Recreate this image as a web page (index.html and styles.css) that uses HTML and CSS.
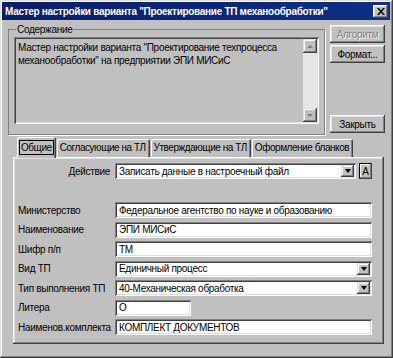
FILE: index.html
```html
<!DOCTYPE html>
<html lang="ru">
<head>
    <meta charset="UTF-8">
    <title>Мастер настройки варианта</title>
    <link rel="stylesheet" href="styles.css">
</head>
<body>
    <div class="window">
        <div class="titlebar">
            <span class="title">Мастер настройки варианта "Проектирование ТП механообработки"</span>
            <button class="close">
                <svg width="8" height="7" viewBox="0 0 8 7"><path d="M0 0h2l2 2.5L6 0h2L5 3.5 8 7H6L4 4.5 2 7H0l3-3.5z" fill="#000"/></svg>
            </button>
        </div>

        <div class="top">
            <fieldset class="group">
                <legend>Содержание</legend>
                <div class="memo">
                    <div class="memo-text">Мастер настройки варианта "Проектирование техпроцесса механообработки" на предприятии ЭПИ МИСиС</div>
                    <div class="vscroll">
                        <div class="sbtn"><span class="tri-up"></span></div>
                        <div class="track"></div>
                        <div class="sbtn"><span class="tri-down"></span></div>
                    </div>
                </div>
            </fieldset>
            <div class="side">
                <button class="btn disabled">Алгоритм</button>
                <button class="btn">Формат...</button>
                <button class="btn btn-close">Закрыть</button>
            </div>
        </div>

        <div class="tabs">
            <div class="tab active"><span class="focus">Общие</span></div>
            <div class="tab">Согласующие на ТЛ</div>
            <div class="tab">Утверждающие на ТЛ</div>
            <div class="tab">Оформление бланков</div>
        </div>

        <div class="panel">
            <div class="row">
                <span class="label right">Действие</span>
                <div class="action">
                    <div class="field combo"><span class="val">Записать данные в настроечный файл</span><span class="drop"><span class="tri-down dark"></span></span></div>
                    <button class="abtn">A</button>
                </div>
            </div>

            <div class="fields">
                <div class="row">
                    <span class="label">Министерство</span>
                    <div class="field"><span class="val">Федеральное агентство по науке и образованию</span></div>
                </div>
                <div class="row">
                    <span class="label">Наименование</span>
                    <div class="field"><span class="val">ЭПИ МИСиС</span></div>
                </div>
                <div class="row">
                    <span class="label">Шифр п/п</span>
                    <div class="field"><span class="val">ТМ</span></div>
                </div>
                <div class="row">
                    <span class="label">Вид ТП</span>
                    <div class="field combo"><span class="val">Единичный процесс</span><span class="drop"><span class="tri-down dark"></span></span></div>
                </div>
                <div class="row">
                    <span class="label">Тип выполнения ТП</span>
                    <div class="field combo"><span class="val">40-Механическая обработка</span><span class="drop"><span class="tri-down dark"></span></span></div>
                </div>
                <div class="row">
                    <span class="label">Литера</span>
                    <div class="field short"><span class="val">О</span></div>
                </div>
                <div class="row">
                    <span class="label">Наименов.комплекта</span>
                    <div class="field"><span class="val">КОМПЛЕКТ ДОКУМЕНТОВ</span></div>
                </div>
            </div>
        </div>
    </div>
</body>
</html>
```

FILE: styles.css
```css
* {
    box-sizing: border-box;
}
body {
    margin: 0;
    background: #c0c0c0;
    font-family: "Liberation Sans", Arial, sans-serif;
    font-size: 10px;
    letter-spacing: -0.3px;
    color: #000;
}
.window {
    width: 393px;
    height: 358px;
    background: #c0c0c0;
    padding: 2px 3px 3px 2px;
    display: flex;
    flex-direction: column;
    box-shadow: inset -1px -1px #404040, inset 1px 1px #dfdfdf, inset -2px -2px #808080, inset 2px 2px #fff;
}
.titlebar {
    height: 18px;
    background: linear-gradient(90deg, #0a1d6a, #0e2f86);
    display: flex;
    align-items: center;
    justify-content: space-between;
    padding: 0 2px 0 3px;
}
.title {
    color: #fff;
    font-weight: bold;
    font-size: 10px;
    white-space: nowrap;
    overflow: hidden;
}
.close {
    flex-shrink: 0;
    width: 15px;
    height: 13px;
    padding: 0;
    border: none;
    background: #c0c0c0;
    display: flex;
    align-items: center;
    justify-content: center;
    box-shadow: inset -1px -1px #404040, inset 1px 1px #fff, inset -2px -2px #808080, inset 2px 2px #dfdfdf;
}

/* top part: group box + buttons */
.top {
    display: flex;
    gap: 5px;
    padding: 0 4px 0 6px;
}
.group {
    margin: 3px 0 0;
    width: 317px;
    height: 112px;
    padding: 1px 5px 8px 5px;
    border: 1px solid #808080;
    box-shadow: 1px 1px 0 #fff;
}
.group legend {
    padding: 0 1px;
    margin-left: 2px;
    line-height: 13px;
}
.memo {
    height: 87px;
    display: flex;
    background: #c0c0c0;
    padding: 2px;
    box-shadow: inset 1px 1px #808080, inset -1px -1px #fff, inset 2px 2px #404040, inset -2px -2px #dfdfdf;
}
.memo-text {
    flex: 1;
    padding: 2px 0 0 2px;
    line-height: 13px;
}
.vscroll {
    width: 14px;
    display: flex;
    flex-direction: column;
}
.track {
    flex: 1;
    background: #e6e6e6;
}
.sbtn {
    height: 14px;
    background: #c0c0c0;
    display: flex;
    align-items: center;
    justify-content: center;
    box-shadow: inset -1px -1px #404040, inset 1px 1px #dfdfdf, inset -2px -2px #808080, inset 2px 2px #fff;
}
.tri-up {
    width: 0;
    height: 0;
    border-left: 3px solid transparent;
    border-right: 3px solid transparent;
    border-bottom: 3px solid #808080;
}
.tri-down {
    width: 0;
    height: 0;
    border-left: 3px solid transparent;
    border-right: 3px solid transparent;
    border-top: 3px solid #808080;
}
.tri-down.dark {
    border-left-width: 3.5px;
    border-right-width: 3.5px;
    border-top: 4px solid #000;
}
.side {
    width: 55px;
    display: flex;
    flex-direction: column;
    gap: 2px;
    padding-top: 5px;
}
.btn {
    height: 18px;
    padding: 0;
    border: none;
    background: #c0c0c0;
    font-family: inherit;
    font-size: 10px;
    letter-spacing: -0.3px;
    color: #000;
    box-shadow: inset -1px -1px #404040, inset 1px 1px #fff, inset -2px -2px #808080, inset 2px 2px #dfdfdf;
}
.btn.disabled {
    color: #808080;
    text-shadow: 1px 1px 0 #fff;
}
.btn-close {
    margin-top: 50px;
}

/* tabs */
.tabs {
    display: flex;
    align-items: flex-end;
    height: 20px;
    margin-top: 2px;
    padding-left: 15px;
}
.tab {
    height: 18px;
    padding: 3px 4px 0 3px;
    margin-right: 1px;
    background: #c0c0c0;
    white-space: nowrap;
    letter-spacing: -0.45px;
    box-shadow: inset 1px 1px #fff, inset -1px 0 #404040, inset -2px 0 #808080;
    border-radius: 2px 2px 0 0;
}
.tab.active {
    height: 21px;
    margin-bottom: -1px;
    padding: 3px 2px 0;
    position: relative;
    z-index: 1;
}
.focus {
    display: inline-block;
    border: 1px solid #000;
    padding: 0 1px;
    line-height: 13px;
}

/* panel */
.panel {
    height: 187px;
    margin: 0 6px 0 11px;
    padding: 6px 12px 0 5px;
    box-shadow: inset -1px -1px #404040, inset 1px 1px #fff, inset -2px -2px #808080, inset 2px 2px #dfdfdf;
}
.row {
    display: grid;
    grid-template-columns: 97px 1fr;
    align-items: center;
    height: 16px;
}
.label {
    white-space: nowrap;
}
.label.right {
    text-align: right;
    padding-right: 5px;
}
.action {
    display: flex;
    align-items: center;
    gap: 3px;
}
.action .field {
    flex: 1;
}
.abtn {
    width: 13px;
    height: 16px;
    padding: 0;
    border: none;
    background: #c0c0c0;
    font-family: inherit;
    font-size: 10px;
    box-shadow: inset -1px -1px #404040, inset 1px 1px #000, inset -2px -2px #808080, inset 2px 2px #fff;
}
.fields {
    margin-top: 23px;
    display: flex;
    flex-direction: column;
    gap: 3.5px;
}
.field {
    height: 16px;
    background: #fff;
    display: flex;
    align-items: center;
    padding: 2px;
    box-shadow: inset 1px 1px #808080, inset -1px -1px #fff, inset 2px 2px #404040, inset -2px -2px #dfdfdf;
}
.field.short {
    width: 76px;
}
.val {
    flex: 1;
    padding-left: 2px;
    white-space: nowrap;
    overflow: hidden;
}
.drop {
    width: 13px;
    height: 12px;
    background: #c0c0c0;
    display: flex;
    align-items: center;
    justify-content: center;
    box-shadow: inset -1px -1px #404040, inset 1px 1px #dfdfdf, inset -2px -2px #808080, inset 2px 2px #fff;
}
```
